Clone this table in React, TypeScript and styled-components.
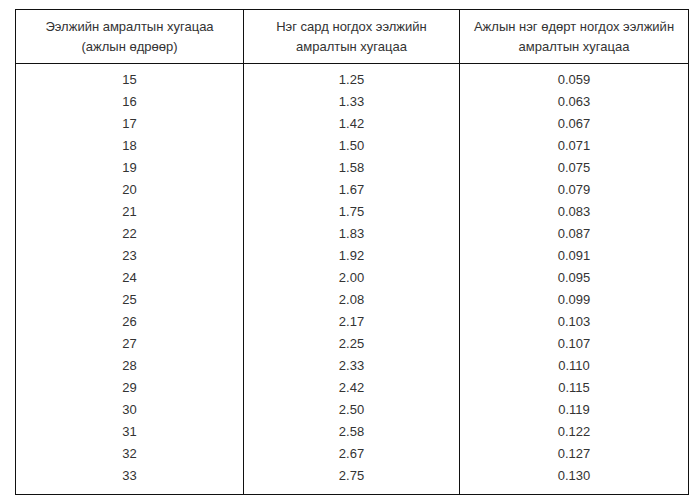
import React from 'react';
import styled, { createGlobalStyle } from 'styled-components';

const GlobalStyle = createGlobalStyle`
  html, body {
    margin: 0;
    padding: 0;
    background: #ffffff;
  }
`;

const Page = styled.div`
  padding: 9px 0 0 15px;
  font-family: Arial, "Liberation Sans", sans-serif;
  font-size: 13px;
  color: #333333;
`;

const Table = styled.table`
  border-collapse: collapse;
  width: 673px;
  table-layout: fixed;
  border: 1px solid #111111;
`;

const Col = styled.col<{ $w: number }>`
  width: ${(p) => p.$w}px;
`;

const HeadCell = styled.th`
  box-sizing: border-box;
  font-weight: normal;
  text-align: center;
  line-height: 20px;
  padding: 7px 0 6px;
  border: 1px solid #111111;
  color: #333333;
  white-space: nowrap;
`;

const Cell = styled.td<{ $first?: boolean; $last?: boolean }>`
  box-sizing: border-box;
  text-align: center;
  line-height: 22px;
  padding: ${(p) => (p.$first ? '5px' : '0')} 0 ${(p) => (p.$last ? '7px' : '0')};
  border-left: 1px solid #111111;
  border-right: 1px solid #111111;
`;

const rows: [string, string, string][] = [
  ['15', '1.25', '0.059'],
  ['16', '1.33', '0.063'],
  ['17', '1.42', '0.067'],
  ['18', '1.50', '0.071'],
  ['19', '1.58', '0.075'],
  ['20', '1.67', '0.079'],
  ['21', '1.75', '0.083'],
  ['22', '1.83', '0.087'],
  ['23', '1.92', '0.091'],
  ['24', '2.00', '0.095'],
  ['25', '2.08', '0.099'],
  ['26', '2.17', '0.103'],
  ['27', '2.25', '0.107'],
  ['28', '2.33', '0.110'],
  ['29', '2.42', '0.115'],
  ['30', '2.50', '0.119'],
  ['31', '2.58', '0.122'],
  ['32', '2.67', '0.127'],
  ['33', '2.75', '0.130'],
];

export default function App() {
  return (
    <>
      <GlobalStyle />
      <Page>
        <Table>
          <colgroup>
            <Col $w={228} />
            <Col $w={216} />
            <Col $w={229} />
          </colgroup>
          <thead>
            <tr>
              <HeadCell>
                Ээлжийн амралтын хугацаа
                <br />
                (ажлын өдрөөр)
              </HeadCell>
              <HeadCell>
                Нэг сард ногдох ээлжийн
                <br />
                амралтын хугацаа
              </HeadCell>
              <HeadCell>
                Ажлын нэг өдөрт ногдох ээлжийн
                <br />
                амралтын хугацаа
              </HeadCell>
            </tr>
          </thead>
          <tbody>
            {rows.map((r, i) => (
              <tr key={r[0]}>
                {r.map((v, j) => (
                  <Cell key={j} $first={i === 0} $last={i === rows.length - 1}>
                    {v}
                  </Cell>
                ))}
              </tr>
            ))}
          </tbody>
        </Table>
      </Page>
    </>
  );
}
